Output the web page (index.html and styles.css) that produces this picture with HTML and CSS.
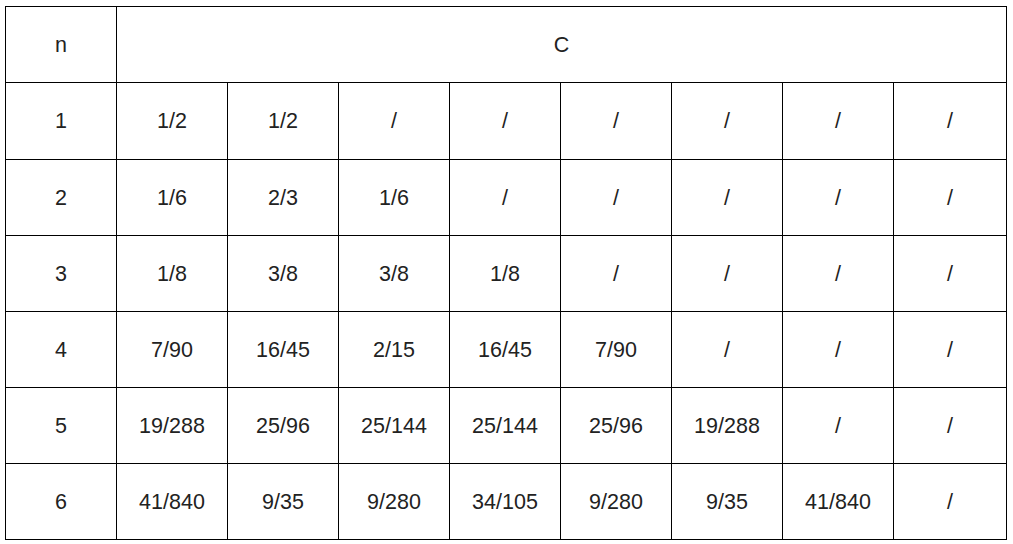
FILE: index.html
```html
<!DOCTYPE html>
<html>
<head>
<meta charset="utf-8">
<link rel="stylesheet" href="styles.css">
</head>
<body>
<div class="grid">
  <div class="cell">n</div><div class="cell span">C</div>
  <div class="cell">1</div><div class="cell">1/2</div><div class="cell">1/2</div><div class="cell">/</div><div class="cell">/</div><div class="cell">/</div><div class="cell">/</div><div class="cell">/</div><div class="cell">/</div>
  <div class="cell">2</div><div class="cell">1/6</div><div class="cell">2/3</div><div class="cell">1/6</div><div class="cell">/</div><div class="cell">/</div><div class="cell">/</div><div class="cell">/</div><div class="cell">/</div>
  <div class="cell">3</div><div class="cell">1/8</div><div class="cell">3/8</div><div class="cell">3/8</div><div class="cell">1/8</div><div class="cell">/</div><div class="cell">/</div><div class="cell">/</div><div class="cell">/</div>
  <div class="cell">4</div><div class="cell">7/90</div><div class="cell">16/45</div><div class="cell">2/15</div><div class="cell">16/45</div><div class="cell">7/90</div><div class="cell">/</div><div class="cell">/</div><div class="cell">/</div>
  <div class="cell">5</div><div class="cell">19/288</div><div class="cell">25/96</div><div class="cell">25/144</div><div class="cell">25/144</div><div class="cell">25/96</div><div class="cell">19/288</div><div class="cell">/</div><div class="cell">/</div>
  <div class="cell">6</div><div class="cell">41/840</div><div class="cell">9/35</div><div class="cell">9/280</div><div class="cell">34/105</div><div class="cell">9/280</div><div class="cell">9/35</div><div class="cell">41/840</div><div class="cell">/</div>
</div>
</body>
</html>
```
FILE: styles.css
```css
html, body {
  margin: 0;
  background: #ffffff;
}
body {
  padding: 6px 0 0 5px;
  font-family: "Liberation Sans", Arial, sans-serif;
  color: #222222;
}
.grid {
  display: grid;
  grid-template-columns: 111px repeat(7, 111px) 113px;
  grid-template-rows: 76px 77px repeat(5, 76px);
  width: max-content;
  border-top: 1px solid #000000;
  border-left: 1px solid #000000;
}
.cell {
  box-sizing: border-box;
  display: flex;
  align-items: center;
  justify-content: center;
  border-right: 1px solid #000000;
  border-bottom: 1px solid #000000;
  font-size: 21.5px;
  line-height: 24px;
}
.span {
  grid-column: span 8;
}
```
